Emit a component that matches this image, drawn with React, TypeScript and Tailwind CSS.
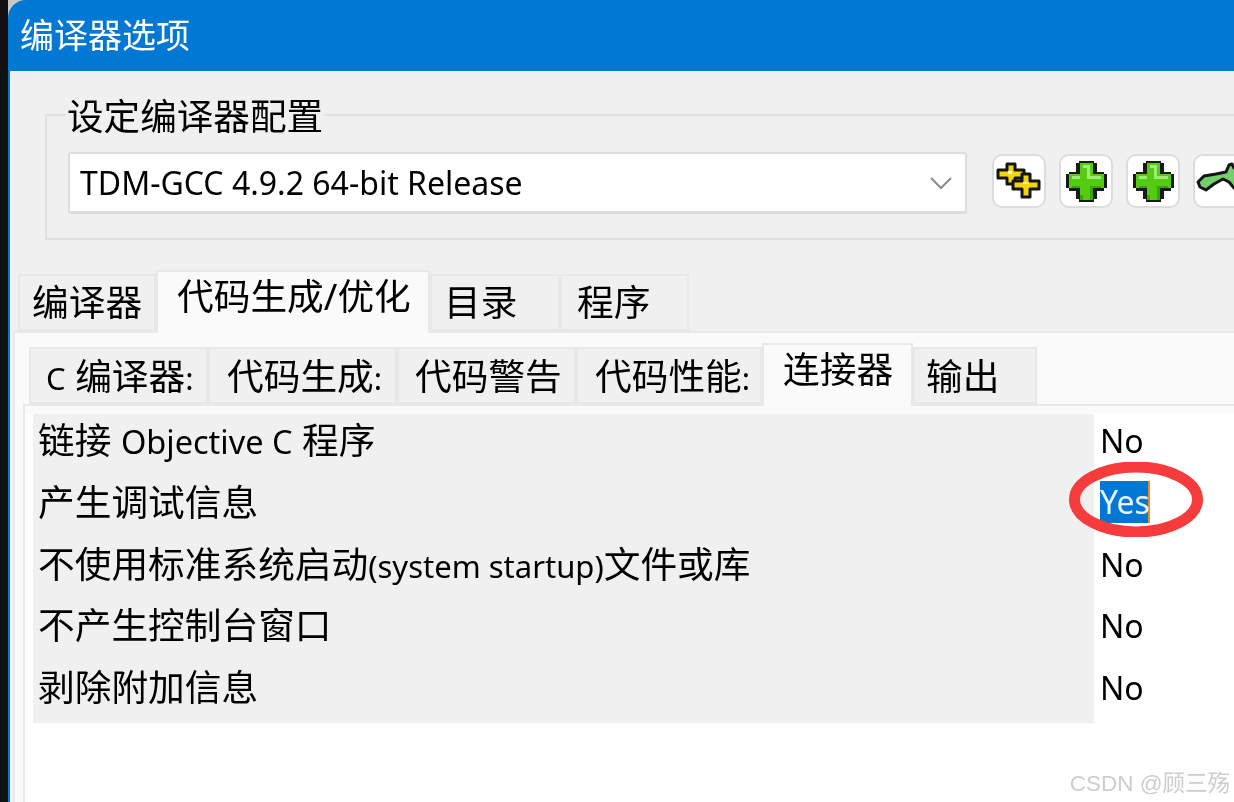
import { ReactNode } from 'react';

// Latin runs are smaller than the CJK text around them in the reference
function Latin({ children }: { children: ReactNode }) {
  return <span className="text-[31px]">{children}</span>;
}

const outerTabs = [
  { id: 'compiler', label: '编译器', className: 'w-[138px] h-[57px] bg-[#f0f0f0] pl-[12px] pt-[2px]' },
  { id: 'codegen', label: '代码生成/优化', className: 'w-[274px] h-[63px] bg-[#fafafa] pl-[19px] border-b-0', active: true },
  { id: 'dirs', label: '目录', className: 'w-[130px] h-[57px] bg-[#f0f0f0] pl-[12px] pt-[2px]' },
  { id: 'programs', label: '程序', className: 'w-[129px] h-[57px] bg-[#f0f0f0] pl-[15px] pt-[2px]' },
];

const innerTabs = [
  { id: 'c', label: <><Latin>C</Latin> 编译器<Latin>:</Latin></>, className: 'w-[179px] h-[57px] bg-[#f0f0f0] pl-[15px] pt-[3px]' },
  { id: 'gen', label: <>代码生成<Latin>:</Latin></>, className: 'w-[189px] h-[57px] bg-[#f0f0f0] pl-[17px] pt-[3px]' },
  { id: 'warn', label: '代码警告', className: 'w-[179px] h-[57px] bg-[#f0f0f0] pl-[16px] pt-[3px]' },
  { id: 'perf', label: <>代码性能<Latin>:</Latin></>, className: 'w-[186px] h-[57px] bg-[#f0f0f0] pl-[17px] pt-[3px]' },
  { id: 'link', label: '连接器', className: 'w-[151px] h-[63px] bg-[#fafafa] pl-[19px] border-b-0', active: true },
  { id: 'out', label: '输出', className: 'w-[124px] h-[57px] bg-[#f0f0f0] pl-[11px] pt-[3px]' },
];

const options = [
  { id: 'objc', label: <>链接 <span className="text-[32.5px]">Objective C</span> 程序</>, value: 'No' },
  { id: 'debug', label: '产生调试信息', value: 'Yes' },
  { id: 'startup', label: <>不使用标准系统启动<Latin>(system startup)</Latin>文件或库</>, value: 'No' },
  { id: 'console', label: '不产生控制台窗口', value: 'No' },
  { id: 'strip', label: '剥除附加信息', value: 'No' },
];

function Tab({ label, className, active }: { label: ReactNode; className: string; active?: boolean }) {
  return (
    <div
      className={`shrink-0 border-2 border-[#e8e8e8] whitespace-nowrap leading-[48px] text-[36.7px] text-black ${active ? 'relative z-10 -mb-[2px]' : ''} ${className}`}
    >
      {label}
    </div>
  );
}

function ToolButton({ children }: { children: ReactNode }) {
  return (
    <div className="w-[54px] h-[54px] shrink-0 rounded-[10px] bg-white border-2 border-[#dcdcdc] flex items-center justify-center">
      {children}
    </div>
  );
}

function PlusIcon() {
  return (
    <svg width="41" height="44" viewBox="0 0 44 46" shapeRendering="crispEdges">
      <path d="M14 1h16v3h3v9h8v3h3v15h-3v3h-8v8h-3v3H14v-3h-3v-8H3v-3H0V16h3v-3h8V4h3z" fill="#1a1a1a" />
      <path d="M15 4h14v12h12v15H29v12H15V31H3V16h12z" fill="#55cc12" />
      <path d="M18 6h8v12h12v3H23V9h-5zM6 18h9v3H6z" fill="#9cec78" />
      <path d="M26 28h12v3H29v12h-3zM6 28h9v3H6zM15 38h3v5h-3z" fill="#35a808" />
    </svg>
  );
}

function YellowPlusIcon() {
  return (
    <svg width="46" height="38" viewBox="0 0 46 38">
      <path d="M11 2h8v6h9v8h-9v6h-8v-6H2V8h9z" fill="#f6d40a" stroke="#141414" strokeWidth="3" strokeLinejoin="round" />
      <path d="M26 12h8v7h9v8h-9v8h-8v-8H17v-8h9z" fill="#f6d40a" stroke="#141414" strokeWidth="3" strokeLinejoin="round" />
      <rect x="12" y="9" width="4" height="3" fill="#fffbd0" />
      <rect x="27" y="20" width="6" height="2" fill="#fff09a" />
    </svg>
  );
}

function ArrowIcon() {
  return (
    <svg width="48" height="32" viewBox="0 0 48 32" className="shrink-0 mb-[10px]">
      <path
        d="M2 22l6-6 12-2 10-2 3-7 3-1 2 4 10 2v16l-10 2-5-6-6-3-9 5-8 6-6-3z"
        fill="#74d06c"
        stroke="#141414"
        strokeWidth="3"
        strokeLinejoin="round"
      />
    </svg>
  );
}

export default function App() {
  return (
    <div
      className="w-[1234px] h-[802px] overflow-hidden flex bg-[#111111] text-black blur-[0.4px]"
      style={{ fontFamily: '"Noto Sans", "Noto Sans CJK SC", sans-serif' }}
    >
      <div className="w-[8px] shrink-0" />
      <div className="flex-1 min-w-0 bg-[#c9c9c9]">
        <div className="h-full flex flex-col bg-[#0078d4] pl-[2px] rounded-tl-[18px] overflow-hidden">
          {/* Title bar */}
          <div className="h-[71px] shrink-0 pl-[10px] pt-[10px] text-[34px] leading-[50px] text-white">编译器选项</div>

          <div className="relative flex-1 min-h-0 bg-[#f0f0f0] pt-[43px] overflow-hidden">
            {/* Compiler set group */}
            <div className="relative ml-[35px] w-[1250px] h-[126px] border-2 border-[#e0e0e0] pl-[21px] pt-[36px]">
              <span className="absolute left-[19px] -top-[24px] bg-[#f0f0f0] px-[1px] text-[36.6px] leading-[48px]">
                设定编译器配置
              </span>
              <div className="flex items-start">
                <div className="w-[899px] h-[62px] shrink-0 bg-white border-2 border-[#dcdcdc] border-b-[3px] rounded-[3px] flex items-center justify-between pl-[10px] pr-[12px]">
                  <span className="text-[32px] leading-[44px] whitespace-nowrap">TDM-GCC 4.9.2 64-bit Release</span>
                  <svg width="24" height="14" viewBox="0 0 24 14">
                    <path d="M2 2l10 10L22 2" fill="none" stroke="#8a8a8a" strokeWidth="2" />
                  </svg>
                </div>
                <div className="flex gap-[13px] ml-[25px] mt-[2px]">
                  <ToolButton>
                    <YellowPlusIcon />
                  </ToolButton>
                  <ToolButton>
                    <PlusIcon />
                  </ToolButton>
                  <ToolButton>
                    <PlusIcon />
                  </ToolButton>
                  <ToolButton>
                    <ArrowIcon />
                  </ToolButton>
                </div>
              </div>
            </div>

            {/* Outer tabs */}
            <div className="flex items-end ml-[8px] h-[63px] mt-[28px]">
              {outerTabs.map(({ id, ...t }) => (
                <Tab key={id} {...t} />
              ))}
            </div>

            <div className="ml-[3px] h-[473px] bg-[#fafafa] border-l-2 border-t-2 border-[#e8e8e8] pl-[8px] pt-[9px]">
              {/* Inner tabs */}
              <div className="flex items-end ml-[6px] h-[62px]">
                {innerTabs.map(({ id, ...t }) => (
                  <Tab key={id} {...t} />
                ))}
              </div>

              <div className="h-[400px] bg-white border-l-2 border-t-2 border-[#e8e8e8] pl-[8px]">
                <div className="h-[8px] -ml-[8px] bg-[#fafafa]" />
                {options.map((o) => (
                  <div key={o.id} className="flex h-[61.8px]">
                    <div className="w-[1061px] shrink-0 bg-[#f0f0f0] pl-[5px] pt-[2px] text-[36.7px] leading-[48px] whitespace-nowrap">
                      {o.label}
                    </div>
                    <div className="relative pl-[6px] pt-[3px] text-[32px] leading-[48px]">
                      {o.value === 'Yes' ? (
                        <>
                          <span className="block w-[50px] h-[42px] mt-[2px] bg-[#0078d4] border-r-[2px] border-[#f08a24] text-[#e8f2ff] leading-[42px]">
                            Yes
                          </span>
                          {/* red annotation ring */}
                          <svg width="134" height="75" viewBox="0 0 134 75" className="absolute -left-[25px] -top-[14px]">
                            <ellipse cx="67" cy="37.5" rx="61.5" ry="32.5" fill="none" stroke="#f53b3b" strokeWidth="11" />
                          </svg>
                        </>
                      ) : (
                        o.value
                      )}
                    </div>
                  </div>
                ))}
              </div>
            </div>

            {/* Watermark */}
            <div
              className="absolute right-[4px] bottom-[3px] text-[22.5px] leading-[30px] text-[#cdcdcd] whitespace-nowrap"
              style={{ fontFamily: '"Liberation Sans", "Noto Sans CJK SC", sans-serif' }}
            >
              CSDN @顾三殇
            </div>
          </div>
        </div>
      </div>
    </div>
  );
}
